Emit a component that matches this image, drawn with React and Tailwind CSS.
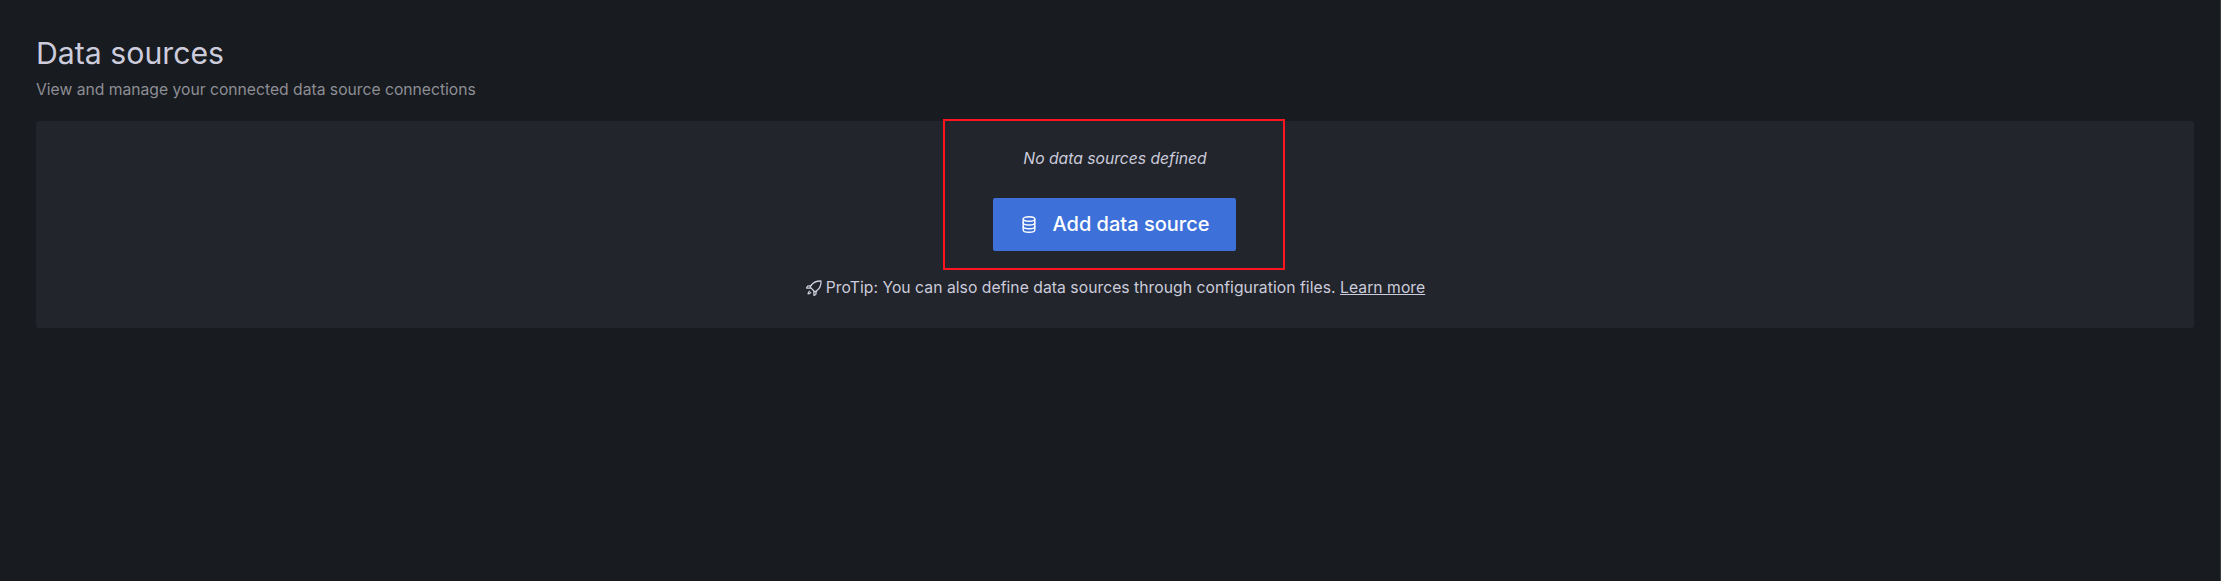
import React from "react";

// foguete do ProTip, contorno simples apontando para cima e à direita
function RocketIcon() {
  return (
    <svg viewBox="0 0 18 18" className="h-[18px] w-[18px]" fill="none" stroke="currentColor" strokeWidth="1.3" strokeLinejoin="round" strokeLinecap="round">
      <path d="M16 2c-4.200-.2-7.400 1.200-9.600 4L5 8l5 5 2-1.400c2.800-2.200 4.200-5.400 4-9.600z" />
      <path d="M6.200 6.700 2.500 7.200 1.500 9l3.800.2" />
      <path d="M11.300 11.800 10.800 15.500 9 16.500l-.2-3.800" />
      <path d="M4.500 12.300c-.9.500-1.300 1.300-1.400 2.600 1.300-.1 2.100-.5 2.600-1.400" />
    </svg>
  );
}

// cilindro do botão, três faixas com um ponto em cada uma das de baixo
function DatabaseIcon() {
  return (
    <svg viewBox="0 0 14 17" className="h-[17px] w-[14px]" fill="none" stroke="currentColor" strokeWidth="1.4" strokeLinecap="round">
      <ellipse cx="7" cy="3" rx="5.800" ry="2.200" />
      <path d="M1.200 3v11c0 1.200 2.600 2.200 5.800 2.200s5.800-1 5.800-2.200V3" />
      <path d="M1.200 6.800c0 1.200 2.600 2.200 5.800 2.200s5.800-1 5.800-2.200" />
      <path d="M1.200 10.500c0 1.200 2.600 2.200 5.800 2.200s5.800-1 5.800-2.200" />
      <path d="M3.600 8.400h.01M3.600 12.100h.01" />
    </svg>
  );
}

export default function App() {
  return (
    <div className="h-[581px] w-full overflow-hidden border-r border-[#3a3f44] bg-[#181b1f] pl-9 pr-[26px] pt-[34px] font-['Inter',sans-serif]">
      <h1 className="text-[30.24px] leading-[38px] font-normal text-[#ccccdc]">Data sources</h1>
      <p className="mt-[7px] text-[15.68px] leading-[22px] text-[#8e8e96]">
        View and manage your connected data source connections
      </p>

      <div className="mt-[20px] flex h-[207px] flex-col items-center rounded-[3px] bg-[#22252b]">
        <div className="-mt-0.5 mr-[2px] flex h-[151px] w-[342px] flex-col items-center border-2 border-[#ff1420]">
          <p className="mt-[27px] ml-[2px] text-[15.68px] leading-[22px] italic text-[#ccccdc]">No data sources defined</p>
          <button className="mt-[28px] flex h-[53px] w-[243px] items-center justify-center gap-[17px] rounded-[2px] bg-[#3d71d9] pb-[2px] pl-[3px] text-xl font-medium text-white">
            <span className="mt-[2px]">
              <DatabaseIcon />
            </span>
            Add data source
          </button>
        </div>

        <div className="mt-[7px] flex items-center gap-[3px] text-[15.68px] leading-[22px] tracking-[0.05px] text-[#ccccdc]">
          <RocketIcon />
          <span>
            ProTip: You can also define data sources through configuration files.{" "}
            <a className="underline">Learn more</a>
          </span>
        </div>
      </div>
    </div>
  );
}
